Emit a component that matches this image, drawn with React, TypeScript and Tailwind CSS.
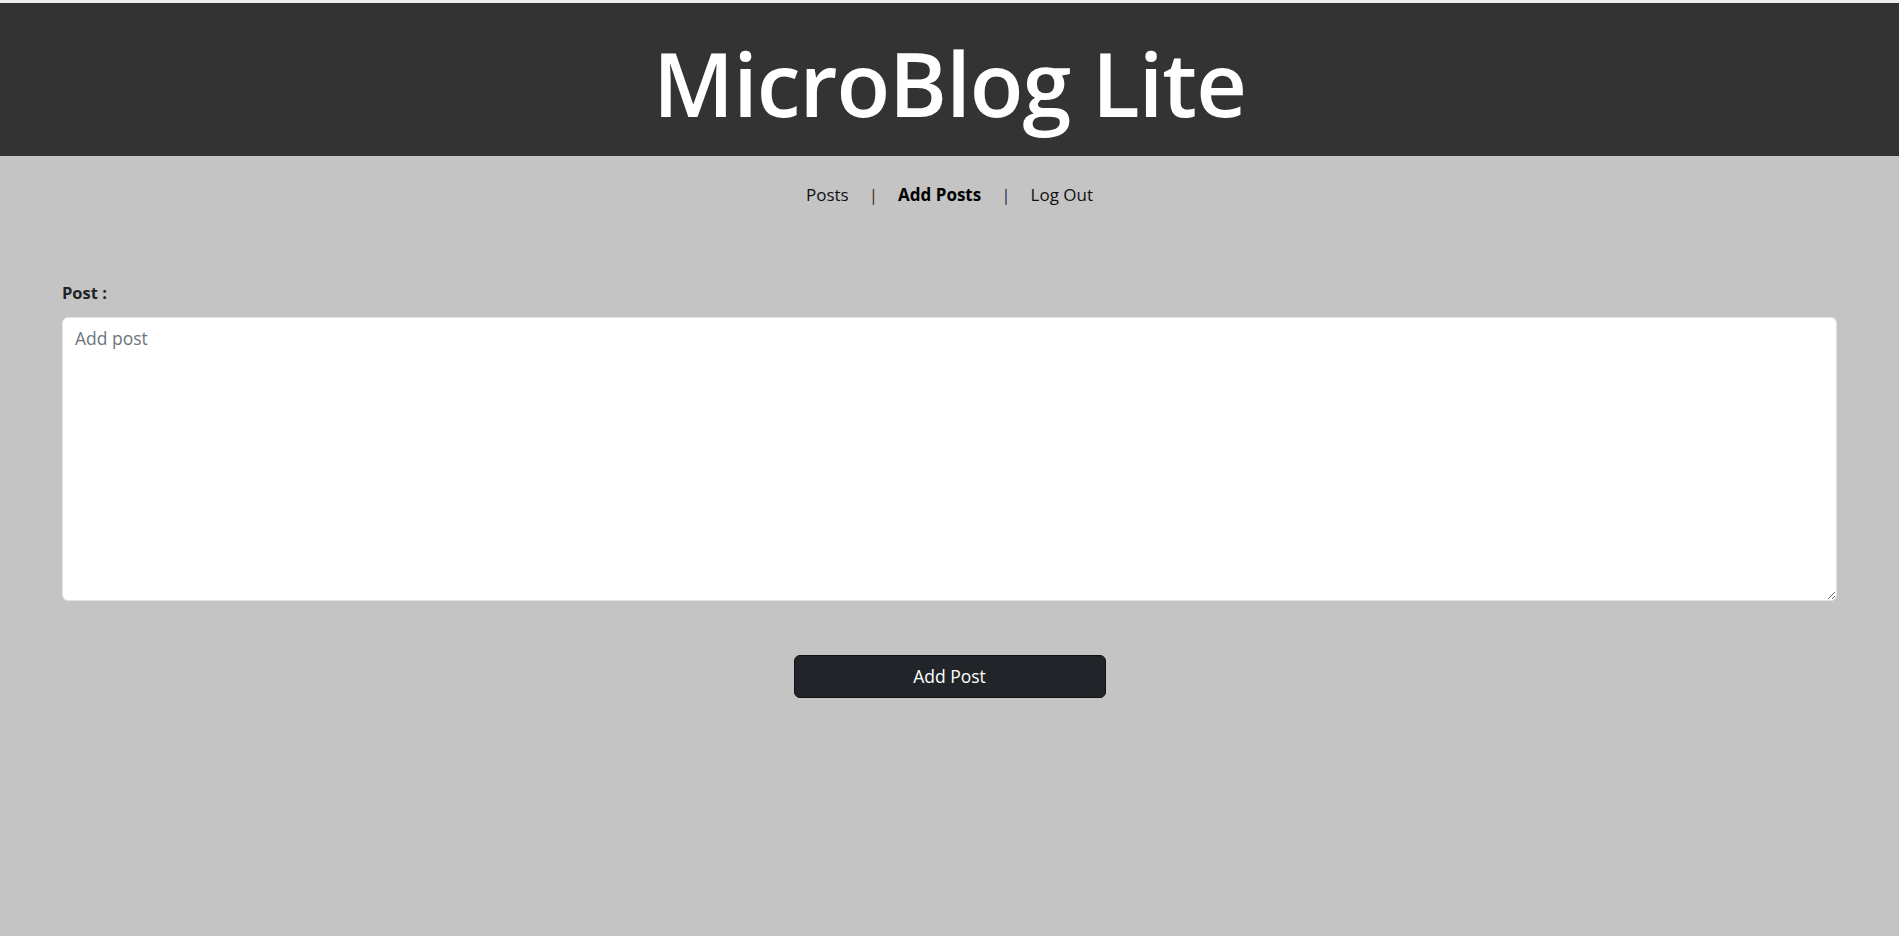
export default function App() {
  return (
    <div
      className="min-h-[936px] bg-[#c4c4c4] text-[#212529]"
      style={{ fontFamily: '"Open Sans", "Noto Sans", sans-serif' }}
    >
      <div className="h-[3px] bg-[#eeeeee]" />
      <header className="h-[153px] bg-[#333333] flex items-center justify-center">
        <h1 className="text-[88px] font-semibold text-white leading-none tracking-[-1px] pt-[6px]">
          MicroBlog Lite
        </h1>
      </header>

      <nav className="flex justify-center items-center gap-[20px] pt-[26px] text-[17px] leading-[26px] text-[#111]">
        <span>Posts</span>
        <span className="text-[#4a2a20]">|</span>
        <span className="font-bold text-black">Add Posts</span>
        <span className="text-[#1f2a44]">|</span>
        <span>Log Out</span>
      </nav>

      <form className="px-[62px] pt-[73px]">
        <label className="block text-[16.5px] font-bold leading-[24px] mb-[12px]">Post :</label>
        <textarea
          placeholder="Add post"
          className="block w-full h-[284px] rounded-[6px] border border-[#dee2e6] bg-white px-[12px] py-[7px] text-[17.5px] leading-[26px] placeholder:text-[#6c757d] outline-none resize-y"
        />
        <div className="flex justify-center pt-[54px]">
          <button
            type="button"
            className="w-[312px] h-[43px] rounded-[6px] bg-[#212529] text-white text-[17.5px] border border-[#111]"
          >
            Add Post
          </button>
        </div>
      </form>
    </div>
  );
}
